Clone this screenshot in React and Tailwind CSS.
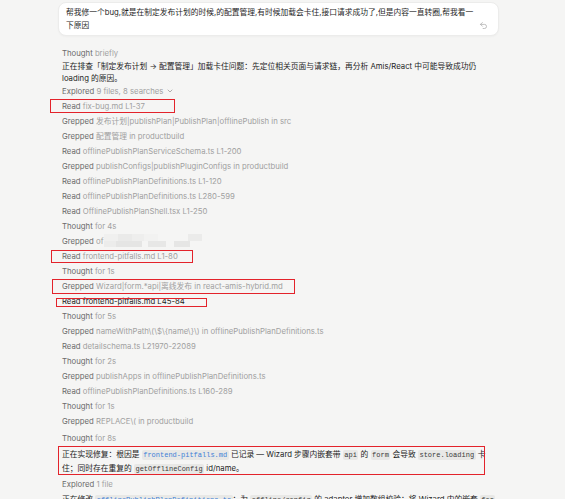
import React from "react";
import { Undo2, ChevronDown } from "lucide-react";

const FONT = { fontFamily: "Inter, 'Noto Sans CJK SC', sans-serif" };

function Code({ children, blue }) {
  return (
    <span
      className={
        "rounded-[2px] bg-[#e8e8e6] px-[1.5px] py-[1px] font-['Liberation_Mono','DejaVu_Sans_Mono',monospace] text-[7px] " +
        (blue ? "text-[#3d7fd6]" : "text-[#3a3a3a]")
      }
    >
      {children}
    </span>
  );
}

function Row({ label, detail, dark, box, children }) {
  return (
    <div className="relative h-[15px] whitespace-nowrap leading-[15px]">
      <span className={dark ? "text-[#1c1c1c]" : "text-[#6a6a6a]"}>{label}</span>{" "}
      <span className={dark ? "text-[#1c1c1c]" : "text-[#a0a0a0]"}>{detail}</span>
      {children}
      {box && <div className={box} />}
    </div>
  );
}

function Redacted() {
  return (
    <span className="inline-flex h-[13px] w-[98px] flex-col align-top">
      <span className="flex h-[6.5px]">
        <span className="w-[14px] bg-[#f0f0ef]" />
        <span className="w-[14px] bg-[#eaeae9]" />
        <span className="w-[12px] bg-[#eeeeed]" />
        <span className="w-[14px] bg-[#f2f2f1]" />
        <span className="w-[30px]" />
        <span className="w-[14px] bg-[#ebebea]" />
      </span>
      <span className="flex h-[6.5px]">
        <span className="w-[12px] bg-[#ececeb]" />
        <span className="w-[26px] bg-[#e5e5e4]" />
        <span className="w-[6px]" />
        <span className="w-[18px] bg-[#e7e7e6]" />
        <span className="w-[8px]" />
        <span className="w-[16px] bg-[#e6e6e5]" />
      </span>
    </span>
  );
}

const BOX = "pointer-events-none absolute border-[1.5px] border-[#e3232b] ";

export default function App() {
  return (
    <div className="min-h-[499px] w-full overflow-hidden bg-[#f5f5f4] text-[7.75px]" style={FONT}>
      {/* user bubble */}
      <div className="ml-[58px] mt-[2px] flex w-[441px] rounded-[8px] border border-[#ececeb] bg-white pb-[4px] pl-[7px] pr-[10px] pt-[3px] shadow-[0_1px_2px_rgba(0,0,0,0.03)]">
        <div className="flex-1 whitespace-nowrap leading-[12.5px] text-[#1f1f1f]">
          <div>帮我修一个bug,就是在制定发布计划的时候,的配置管理,有时候加载会卡住,接口请求成功了,但是内容一直转圈,帮我看一</div>
          <div>下原因</div>
        </div>
        <div className="flex items-end pb-[1px]">
          <Undo2 size={9} strokeWidth={2} className="text-[#ababab]" />
        </div>
      </div>

      <div className="ml-[62px] mt-[11px] flex w-[440px] flex-col">
        <div className="h-[13px] leading-[13px]">
          <span className="text-[#6a6a6a]">Thought</span> <span className="text-[#a0a0a0]">briefly</span>
        </div>
        <div className="whitespace-nowrap leading-[12px] text-[#1c1c1c]">
          <div>正在排查「制定发布计划 → 配置管理」加载卡住问题：先定位相关页面与请求链，再分析 Amis/React 中可能导致成功仍</div>
          <div>loading 的原因。</div>
        </div>

        <Row label="Explored" detail="9 files, 8 searches">
          <ChevronDown size={8} strokeWidth={2} className="ml-[3px] inline-block align-[-1px] text-[#8a8a8a]" />
        </Row>
        <Row label="Read" detail="fix-bug.md L1-37" box={BOX + "left-[-12px] top-[-0.5px] h-[14px] w-[125px]"} />
        <Row label="Grepped" detail="发布计划|publishPlan|PublishPlan|offlinePublish in src" />
        <Row label="Grepped" detail="配置管理 in productbuild" />
        <Row label="Read" detail="offlinePublishPlanServiceSchema.ts L1-200" />
        <Row label="Grepped" detail="publishConfigs|publishPluginConfigs in productbuild" />
        <Row label="Read" detail="offlinePublishPlanDefinitions.ts L1-120" />
        <Row label="Read" detail="offlinePublishPlanDefinitions.ts L280-599" />
        <Row label="Read" detail="OfflinePublishPlanShell.tsx L1-250" />
        <Row label="Thought" detail="for 4s" />
        <div className="relative h-[15px] whitespace-nowrap leading-[15px]">
          <span className="text-[#6a6a6a]">Grepped</span> <span className="text-[#a0a0a0]">of</span>
          <Redacted />
        </div>
        <Row label="Read" detail="frontend-pitfalls.md L1-80" box={BOX + "left-[-11px] top-[0.5px] h-[13px] w-[142px]"} />
        <Row label="Thought" detail="for 1s" />
        <Row label="Grepped" detail="Wizard|form.*api|离线发布 in react-amis-hybrid.md" box={BOX + "left-[-10px] top-[-0.5px] h-[15px] w-[243px]"} />
        <Row label="Read" detail="frontend-pitfalls.md L45-84" dark box={BOX + "left-[-6px] top-[3.5px] h-[9px] w-[151px]"} />
        <Row label="Thought" detail="for 5s" />
        <Row label="Grepped" detail="nameWithPath\(\$\{name\}\) in offlinePublishPlanDefinitions.ts" />
        <Row label="Read" detail="detailschema.ts L21970-22089" />
        <Row label="Thought" detail="for 2s" />
        <Row label="Grepped" detail="publishApps in offlinePublishPlanDefinitions.ts" />
        <Row label="Read" detail="offlinePublishPlanDefinitions.ts L160-289" />
        <Row label="Thought" detail="for 1s" />
        <Row label="Grepped" detail="REPLACE\( in productbuild" />
        <div className="mt-[1.5px]">
          <Row label="Thought" detail="for 8s" />
        </div>

        <div className="relative mt-[2.5px] whitespace-nowrap leading-[12.5px] text-[#1c1c1c]">
          <div>
            正在实现修复：根因是 <Code blue>frontend-pitfalls.md</Code> 已记录 — Wizard 步骤内嵌套带 <Code>api</Code> 的{" "}
            <Code>form</Code> 会导致 <Code>store.loading</Code> 卡
          </div>
          <div>
            住；同时存在重复的 <Code>getOfflineConfig</Code> id/name。
          </div>
          <div className={BOX + "left-[-4.5px] top-[-2.5px] h-[29px] w-[427px]"} />
        </div>

        <div className="mt-[2px]">
          <Row label="Explored" detail="1 file" />
        </div>
        <div className="mt-[1px] whitespace-nowrap leading-[12.5px] text-[#1c1c1c]">
          正在修改 <Code blue>offlinePublishPlanDefinitions.ts</Code>：为 <Code>offline/config</Code> 的 adaptor
          增加数组校验；将 Wizard 内的嵌套 <Code>for</Code>
        </div>
      </div>
    </div>
  );
}
